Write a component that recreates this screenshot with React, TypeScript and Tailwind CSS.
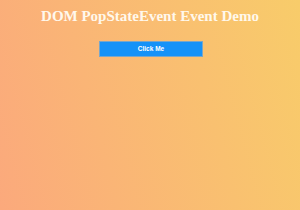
export default function App() {
  return (
    <div className="w-[300px] h-[210px] bg-[linear-gradient(75deg,#fba97c_0%,#f8cc6a_100%)] flex flex-col items-center">
      <h1 className="mt-[8px] text-[15px] leading-[17px] font-bold text-[#fff8ec] font-['Liberation_Serif',serif]">
        DOM PopStateEvent Event Demo
      </h1>
      <button className="mt-[16px] ml-[2px] w-[104px] h-[16px] bg-[#1592f8] border border-[#7aa6c8] text-white text-[6.5px] font-bold font-['Liberation_Sans',sans-serif] flex items-center justify-center">
        Click Me
      </button>
    </div>
  );
}
